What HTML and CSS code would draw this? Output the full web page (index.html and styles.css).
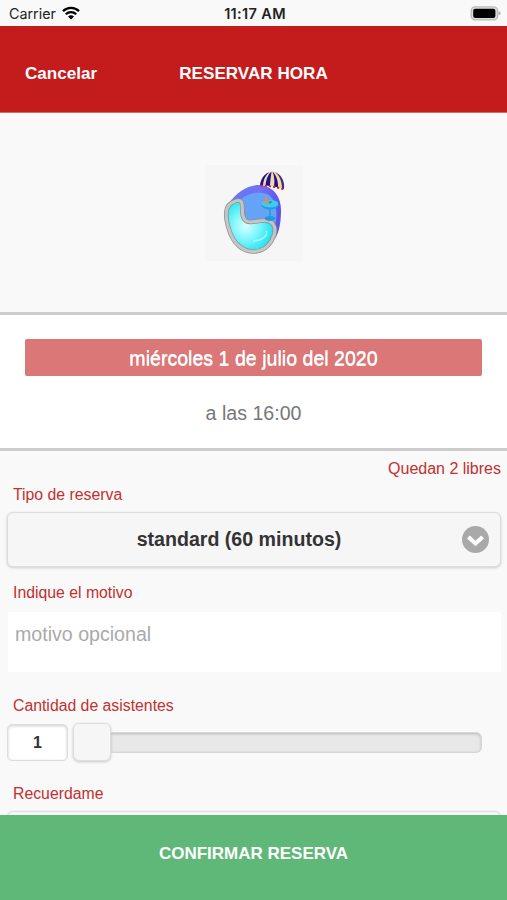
FILE: index.html
```html
<!DOCTYPE html>
<html lang="es">
<head>
    <meta charset="UTF-8">
    <meta name="viewport" content="width=device-width, initial-scale=1.0">
    <title>Reservar hora</title>
    <link rel="stylesheet" href="styles.css">
</head>
<body>
    <div class="status-bar">
        <div class="carrier">
            <span>Carrier</span>
            <svg class="wifi" width="18" height="14" viewBox="0 0 18 14">
                <path d="M1 5.2 A11.4 11.4 0 0 1 17 5.2" fill="none" stroke="#000" stroke-width="2.4"/>
                <path d="M3.8 8.2 A7.4 7.4 0 0 1 14.2 8.2" fill="none" stroke="#000" stroke-width="2.3"/>
                <path d="M9 13.6 L6 10.6 A4.3 4.3 0 0 1 12 10.6 Z" fill="#000"/>
            </svg>
        </div>
        <div class="clock">11:17 AM</div>
        <div class="power">
            <svg width="31" height="15" viewBox="0 0 31 15">
                <rect x="1.2" y="0.9" width="26.4" height="13" rx="4" fill="#dcdcdc" stroke="#bcbcbc" stroke-width="1.4"/>
                <rect x="3.2" y="2.7" width="22.2" height="9.4" rx="2" fill="#000"/>
                <path d="M28.6 5 Q30.6 5.8 30.6 7.3 Q30.6 8.8 28.6 9.6 Z" fill="#b0b0b0"/>
            </svg>
        </div>
    </div>

    <header class="header">
        <a class="cancel">Cancelar</a>
        <h1>RESERVAR HORA</h1>
    </header>

    <div class="picture">
        <svg width="98" height="96" viewBox="0 0 98 96">
            <defs>
                <radialGradient id="water" cx="0.4" cy="0.5" r="0.6">
                    <stop offset="0" stop-color="#d8ffff"/>
                    <stop offset="0.45" stop-color="#7ff6fb"/>
                    <stop offset="1" stop-color="#12e2ee"/>
                </radialGradient>
                <linearGradient id="deck" x1="0" y1="0" x2="1" y2="0.2">
                    <stop offset="0" stop-color="#5e7df0"/>
                    <stop offset="0.6" stop-color="#7370f6"/>
                    <stop offset="1" stop-color="#5c55ea"/>
                </linearGradient>
            </defs>
            <rect width="98" height="96" fill="#f6f6f6"/>
            <!-- deck -->
            <path d="M24 38 C32 27 43 20 54 20 C69 21 76 32 76 46 C76 60 73 71 68 76 L45 68 Z" fill="url(#deck)"/>
            <path d="M34 36 C40 29 52 26 62 29 C72 34 73 50 70 60 C62 54 52 58 45 57 C36 52 42 40 34 36 Z" fill="#65a3f6"/>
            <!-- pool -->
            <path d="M24 40 C28 36 34 34 36.5 37 C39 44 35 51 41 56 C48 60 61 51 68 59 C73 66 67 78 60 83 C53 88 42 88 34 81 C25 74 17 49 24 40 Z" fill="url(#water)" stroke="#8f9294" stroke-width="4.6"/>
            <path d="M24 40 C28 36 34 34 36.5 37 C39 44 35 51 41 56 C48 60 61 51 68 59 C73 66 67 78 60 83 C53 88 42 88 34 81 C25 74 17 49 24 40 Z" fill="none" stroke="#c4c5c5" stroke-width="3"/>
            <path d="M61 66 C64 71 56 76 48 76" fill="none" stroke="#9dfaff" stroke-width="1.6"/>
            <!-- table and drink -->
            <ellipse cx="65" cy="53.5" rx="5.3" ry="2.6" fill="#1f9ade"/>
            <path d="M65 42 V54" stroke="#209bdc" stroke-width="1.6"/>
            <ellipse cx="65" cy="40.3" rx="8.3" ry="4.3" fill="#1d9ce2"/>
            <ellipse cx="65" cy="38.8" rx="8.3" ry="3.8" fill="#3ecbf0"/>
            <path d="M59.5 33.5 H63.5 L62.5 39.5 H60.5 Z" fill="#cf9267"/>
            <path d="M60.5 31.5 L62 35" stroke="#f08848" stroke-width="1.5"/>
            <path d="M64 38 L66.5 36.5" stroke="#358c90" stroke-width="2"/>
            <!-- parasol -->
            <path d="M55 20 C56 12 61 6.5 68 6.5 C76 8 80 16 79 24 Q67 19.5 55 20 Z" fill="#f8db91"/>
            <path d="M55 20 C56 14 59 9 64 7.2 C60 11 58 16 58 20.2 Z" fill="#1711a3"/>
            <path d="M60.5 20.4 C61 14 63 9.5 66.5 6.5 C66 11 65 17 65 21 Z" fill="#1711a3"/>
            <path d="M69 21.6 C70 16 69 10 67.5 6.5 C71.5 10 73.5 17 73 22.6 Z" fill="#1711a3"/>
            <path d="M77 23.4 C77 16 74 10 70 7 C76.5 10 80 16 79 24 Z" fill="#3a2d94"/>
            <path d="M55.5 20.8 Q67 20.5 78.5 24.3" fill="none" stroke="#e01d35" stroke-width="1.9" stroke-dasharray="2.2 2"/>
        </svg>
    </div>

    <section class="when">
        <div class="date">miércoles 1 de julio del 2020</div>
        <div class="time">a las 16:00</div>
    </section>

    <form class="form">
        <p class="free">Quedan 2 libres</p>

        <label class="label">Tipo de reserva</label>
        <div class="select">
            <span>standard (60 minutos)</span>
            <svg class="arrow" width="27" height="27" viewBox="0 0 27 27">
                <circle cx="13.5" cy="13.5" r="13.5" fill="#a9a9a9"/>
                <path d="M6.4 11 L13.5 17.5 L20.6 11" fill="none" stroke="#fff" stroke-width="4"/>
            </svg>
        </div>

        <label class="label reason-label" for="motivo">Indique el motivo</label>
        <textarea class="reason" id="motivo" placeholder="motivo opcional"></textarea>

        <label class="label people-label" for="asistentes">Cantidad de asistentes</label>
        <div class="slider">
            <input class="count" id="asistentes" type="text" value="1">
            <div class="handle"></div>
            <div class="track"></div>
        </div>

        <label class="label remind-label">Recuerdame</label>
        <div class="select"></div>
    </form>

    <button class="confirm">CONFIRMAR RESERVA</button>
</body>
</html>
```

FILE: styles.css
```css
* {
    box-sizing: border-box;
}
body {
    margin: 0;
    height: 900px;
    overflow: hidden;
    display: flex;
    flex-direction: column;
    background-color: #f9f9f9;
    font-family: "Liberation Sans", Arial, sans-serif;
    font-size: 16px;
}
.status-bar {
    flex: none;
    height: 26px;
    padding: 0 6px 0 9px;
    display: grid;
    grid-template-columns: 1fr auto 1fr;
    align-items: center;
    font-family: Inter, sans-serif;
    color: #222;
}
.carrier {
    display: flex;
    align-items: center;
    gap: 6px;
    font-size: 14.3px;
}
.clock {
    padding-top: 1px;
    font-size: 14.5px;
    font-weight: 600;
    letter-spacing: 0.35px;
}
.power {
    display: flex;
    justify-content: flex-end;
}
.header {
    flex: none;
    height: 87px;
    padding: 10px 25px 0;
    display: grid;
    grid-template-columns: 1fr auto 1fr;
    align-items: center;
    background-color: #c41c1c;
    border-bottom: 1px solid #d66a6a;
    color: #fff;
    font-size: 17.1px;
    font-weight: bold;
}
.header h1 {
    margin: 0;
    font-size: 17.1px;
}
.picture {
    flex: none;
    height: 199px;
    display: flex;
    justify-content: center;
    align-items: center;
}
.when {
    flex: none;
    height: 139px;
    padding: 24px 25px 0;
    background-color: #fff;
    border-top: 3px solid #ccc;
    border-bottom: 3px solid #ccc;
    text-align: center;
    font-size: 19.6px;
}
.date {
    height: 37px;
    line-height: 39px;
    border-radius: 2px;
    background-color: #db7777;
    color: #fff;
    text-shadow: 0 1px 0 #f3f3f3;
}
.time {
    margin-top: 25px;
    line-height: 24px;
    color: #777;
}
.form {
    flex: 1;
    min-height: 0;
    overflow: hidden;
    padding: 8px 6px 0 7px;
    display: flex;
    flex-direction: column;
}
.form > * {
    flex: none;
}
.free {
    margin: 0;
    line-height: 20px;
    text-align: right;
    color: #c23030;
}
.label {
    margin: 6px 6px 7px;
    line-height: 20px;
    font-size: 15.8px;
    color: #c23030;
}
.select {
    height: 55px;
    padding: 0 11px 0 40px;
    display: flex;
    align-items: center;
    border: 1px solid #ddd;
    border-radius: 6px;
    background-color: #f6f6f6;
    box-shadow: 0 1px 3px rgba(0, 0, 0, 0.18);
    color: #333;
    font-size: 19.6px;
    font-weight: bold;
}
.select span {
    flex: 1;
    padding-right: 32px;
    text-align: center;
}
.reason-label {
    margin-top: 16px;
    margin-bottom: 9px;
}
.reason {
    height: 60px;
    margin: 0 0 0 1px;
    padding: 11px 7px;
    border: 0;
    resize: none;
    background-color: #fff;
    font: 19.6px "Liberation Sans", Arial, sans-serif;
}
.reason::placeholder {
    color: #aaa;
}
.people-label {
    margin-top: 24px;
}
.slider {
    display: flex;
    align-items: center;
}
.count {
    width: 61px;
    height: 37px;
    margin-right: 5px;
    padding-top: 3px;
    border: 1px solid #ddd;
    border-radius: 5px;
    background-color: #fff;
    box-shadow: inset 0 1px 3px rgba(0, 0, 0, 0.2);
    color: #333;
    font: bold 16px "Liberation Sans", Arial, sans-serif;
    text-align: center;
}
.handle {
    width: 38px;
    height: 38px;
    border: 1px solid #ddd;
    border-radius: 6px;
    background-color: #f6f6f6;
    box-shadow: 0 1px 3px rgba(0, 0, 0, 0.2);
}
.track {
    flex: 1;
    height: 21px;
    margin-right: 19px;
    border: 1px solid #d6d6d6;
    border-left: 0;
    border-radius: 0 6px 6px 0;
    background-color: #e8e8e8;
    box-shadow: inset 0 1px 3px rgba(0, 0, 0, 0.2);
}
.remind-label {
    margin-top: 23px;
}
.confirm {
    flex: none;
    height: 85px;
    padding: 0 0 7px;
    border: 0;
    background-color: #5fb878;
    color: #fff;
    font: bold 17px "Liberation Sans", Arial, sans-serif;
}
```
